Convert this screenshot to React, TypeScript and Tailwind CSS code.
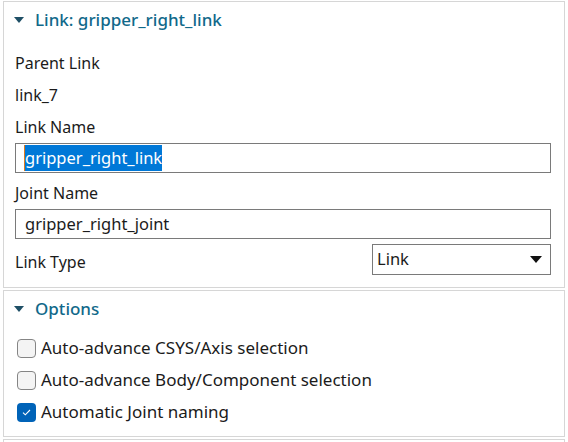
import React, { useState } from 'react';

const Caret = () => (
  <svg width="10" height="6" viewBox="0 0 10 6" className="shrink-0">
    <path d="M0 0 H10 L5 6 Z" fill="#1f4f66" />
  </svg>
);

const Section: React.FC<{ title: string; children: React.ReactNode; className?: string }> = ({ title, children, className }) => (
  <section className={`mx-[3px] border border-[#d6d6d6] bg-white ${className ?? ''}`}>
    <div className="flex h-[34px] items-center gap-[11px] pl-[10px] pt-[1px]">
      <Caret />
      <span className="text-[17px] font-medium text-[#11698a]">{title}</span>
    </div>
    {children}
  </section>
);

const CheckRow: React.FC<{ label: string; checked: boolean; onToggle: () => void }> = ({ label, checked, onToggle }) => (
  <label className="flex h-[32px] cursor-pointer items-center gap-[5px] pl-[13px]" onClick={onToggle}>
    {checked ? (
      <span className="flex h-[19px] w-[19px] items-center justify-center rounded-[4px] bg-[#0063b8]">
        <svg width="9" height="7" viewBox="0 0 9 7">
          <path d="M1 3.6 L3.3 5.8 L8 1" fill="none" stroke="white" strokeWidth="1.1" />
        </svg>
      </span>
    ) : (
      <span className="h-[19px] w-[19px] rounded-[4px] border border-[#858585] bg-[#f4f4f4]" />
    )}
    <span className="text-[17px]">{label}</span>
  </label>
);

export default function App() {
  const [opts, setOpts] = useState([false, false, true]);
  const labels = ['Auto-advance CSYS/Axis selection', 'Auto-advance Body/Component selection', 'Automatic Joint naming'];

  return (
    <div className="h-[442px] w-[568px] overflow-hidden bg-white pt-[1px] font-['Noto_Sans',sans-serif] text-[16px] text-[#1b1b1b]">
      <Section title="Link: gripper_right_link" className="h-[287px]">
        <div className="flex flex-col pl-[11px] pr-[13px] pt-[11px]">
          <div className="flex h-[32px] items-center">Parent Link</div>
          <div className="flex h-[32px] items-center">link_7</div>
          <div className="flex h-[32px] items-center">Link Name</div>
          <div className="flex h-[30px] items-center border border-[#7a7a7a] px-[8px] text-[16.5px]">
            <span className="border-l border-[#e07a1f] bg-[#0078d7] leading-[26px] text-white">gripper_right_link</span>
          </div>
          <div className="flex h-[36px] items-center pt-[3px]">Joint Name</div>
          <div className="flex h-[30px] items-center border border-[#7a7a7a] px-[9px] text-[16.5px]">gripper_right_joint</div>
          <div className="mt-[5px] flex items-center justify-between">
            <span className="pt-[5px]">Link Type</span>
            <div className="flex h-[31px] w-[179px] items-center justify-between border border-[#7a7a7a] pl-[4px] pr-[8px]">
              <span className="text-[16.5px]">Link</span>
              <svg width="12" height="7" viewBox="0 0 12 7">
                <path d="M0 0 H12 L6 7 Z" fill="#111" />
              </svg>
            </div>
          </div>
        </div>
      </Section>
      <Section title="Options" className="mt-[2px] h-[147px]">
        <div className="flex flex-col pt-[7px]">
          {labels.map((l, i) => (
            <CheckRow
              key={l}
              label={l}
              checked={opts[i]}
              onToggle={() => setOpts(o => o.map((v, j) => (j === i ? !v : v)))}
            />
          ))}
        </div>
      </Section>
      <section className="mx-[3px] mt-[2px] h-[20px] border border-[#d6d6d6] bg-white" />
    </div>
  );
}
